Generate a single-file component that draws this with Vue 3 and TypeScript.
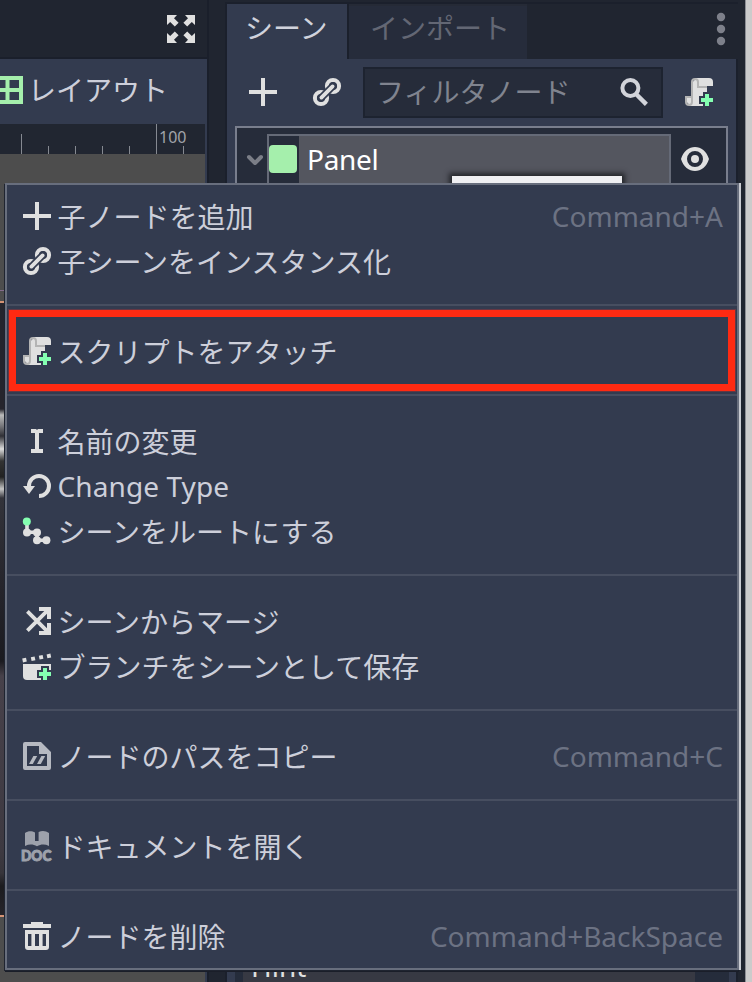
<script setup lang="ts">
interface MenuEntry {
  label?: string
  icon?: string
  shortcut?: string
  latin?: boolean
}

const separator: MenuEntry = {}

const entries: MenuEntry[] = [
  { label: '子ノードを追加', icon: 'add', shortcut: 'Command+A' },
  { label: '子シーンをインスタンス化', icon: 'link' },
  separator,
  { label: 'スクリプトをアタッチ', icon: 'script' },
  separator,
  { label: '名前の変更', icon: 'rename' },
  { label: 'Change Type', icon: 'reload', latin: true },
  { label: 'シーンをルートにする', icon: 'root' },
  separator,
  { label: 'シーンからマージ', icon: 'merge' },
  { label: 'ブランチをシーンとして保存', icon: 'clapper' },
  separator,
  { label: 'ノードのパスをコピー', icon: 'path', shortcut: 'Command+C' },
  separator,
  { label: 'ドキュメントを開く', icon: 'doc' },
  separator,
  { label: 'ノードを削除', icon: 'trash', shortcut: 'Command+BackSpace' },
]
</script>

<template>
  <div class="editor">
    <svg class="sprite" aria-hidden="true">
      <symbol id="add" viewBox="0 0 16 16"><path d="M7 1v6H1v2h6v6h2V9h6V7H9V1z" /></symbol>
      <symbol id="link" viewBox="0 0 16 16">
        <g fill="none" stroke="#e0e0e0">
          <circle cx="11" cy="5" r="3.05" stroke-width="2" />
          <circle cx="5" cy="11" r="3.05" stroke-width="2" />
          <path d="M5 11l6-6" stroke="#333b4f" stroke-width="3.7" stroke-linecap="round" />
          <path d="M5.2 10.8l5.6-5.6" stroke-width="1.9" stroke-linecap="round" />
        </g>
      </symbol>
      <symbol id="script" viewBox="0 0 16 16">
        <path d="M6 1v1a1 1 0 0 0-1 1v10H4v-2H2v2a1 1 0 0 0 1 1v1h7a2 2 0 0 0 2-2V5h3V3a2 2 0 0 0-2-2z" />
        <path fill="#b4b4b4" d="M6 1a2 2 0 0 0-2 2v7H1v3a2 2 0 0 0 4 0V3a1 1 0 0 1 2 0v3h5V5H8V3a2 2 0 0 0-2-2zM2 11h2v2a1 1 0 0 1-2 0z" />
        <path fill="#333b4f" d="M10 8h4v2h2v4h-2v2h-4v-2H8v-4h2z" />
        <path fill="#84ffb1" d="M11 9h2v2h2v2h-2v2h-2v-2H9v-2h2z" />
      </symbol>
      <symbol id="rename" viewBox="0 0 16 16"><path d="M5 2h2.5l.5.5.5-.5H11v2H9v8h2v2H5v-2h2V4H5z" /></symbol>
      <symbol id="reload" viewBox="0 0 16 16">
        <path d="M4 8.5V8a5 5 0 1 1 5 5" fill="none" stroke="#e0e0e0" stroke-width="2" />
        <path d="M1 8h6l-3 4z" />
      </symbol>
      <symbol id="root" viewBox="0 0 16 16">
        <path d="M3 3v5.6h5v4h4.7" fill="none" stroke="#e0e0e0" stroke-width="1.8" />
        <circle cx="3" cy="8.7" r="2" /><circle cx="8" cy="8.7" r="2" />
        <circle cx="8" cy="12.6" r="2" /><circle cx="12.7" cy="12.6" r="2" />
        <circle cx="2.9" cy="3.2" r="2" fill="#84ffb1" />
      </symbol>
      <symbol id="merge" viewBox="0 0 16 16">
        <path d="M3.2 3.2l10 10M3.2 12.8l10-10" fill="none" stroke="#e0e0e0" stroke-width="1.9" />
        <path d="M9 1h6v6h-2V3H9zM13 9h2v6H9v-2h4z" />
      </symbol>
      <symbol id="clapper" viewBox="0 0 16 16">
        <path d="M.6 4.3l1.9-.4.4 1.9-1.9.4zM4.9 3.6l1.9-.4.4 1.9-1.9.4zM8.9 2.900l1.9-.4.4 1.9-1.9.4zM12.8 2.200l1.9-.4.4 1.9-1.9.4z" />
        <path d="M1 7h14v8H3a2 2 0 0 1-2-2z" />
        <path fill="#333b4f" d="M10 8h4v2h2v5h-2v1h-4v-2H8v-4h2z" />
        <path fill="#84ffb1" d="M11 9h2v2h2v2h-2v2h-2v-2H9v-2h2z" />
      </symbol>
      <symbol id="path" viewBox="0 0 16 16">
        <path fill="#b6b9c1" fill-rule="evenodd" d="M2 1h8l5 5v8a1 1 0 0 1-1 1H2a1 1 0 0 1-1-1V2a1 1 0 0 1 1-1zm1 2v10h10V7H9V3z" />
        <path fill="#b6b9c1" d="M4 12h1.9l2.2-4H6.2zM8 12h1.9l2.2-4h-1.9z" />
      </symbol>
      <symbol id="doc" viewBox="0 0 16 16">
        <g fill="#9da1ab">
          <path d="M2 1.5C3.5.3 5.5.3 7 1.3V5.5h1.8V1c1.7-.9 3.6-.7 5.2.5V8c-2-1-4-1-6 .1C6 7 4 7 2 8z" />
          <text x="0" y="15.4" textLength="15.2" lengthAdjust="spacingAndGlyphs" class="doc-word">DOC</text>
        </g>
      </symbol>
      <symbol id="trash" viewBox="0 0 16 16">
        <path d="M5 1h6v1h4v2H1V2h4z" />
        <path fill-rule="evenodd" d="M2 5h12v8.5a1.500 1.500 0 0 1-1.500 1.500h-9A1.500 1.500 0 0 1 2 13.500zM3.500 7v6h1.700V7zM7 7v6h2V7zM10.800 7v6h1.700V7z" />
      </symbol>
      <symbol id="search" viewBox="0 0 16 16">
        <path d="M9 9l5.2 5.2" fill="none" stroke="#d2d4da" stroke-width="2.2" />
        <circle cx="6.2" cy="6" r="4" fill="none" stroke="#d2d4da" stroke-width="2" />
      </symbol>
      <symbol id="expand" viewBox="0 0 16 16">
        <path d="M1 1h5L4.5 2.6 6.8 4.900 4.900 6.800 2.600 4.500 1 6z" />
        <path d="M15 1h-5l1.500 1.600-2.300 2.300 1.900 1.900 2.300-2.300L15 6zM1 15h5l-1.500-1.600 2.300-2.300-1.900-1.900-2.300 2.300L1 10zM15 15h-5l1.500-1.600-2.300-2.300 1.900-1.900 2.300 2.300L15 10z" />
      </symbol>
      <symbol id="eye" viewBox="0 0 16 16">
        <path fill-rule="evenodd" d="M8 2C5 2 2.200 4.100 1 8c1.200 3.900 4 6 7 6s5.800-2.100 7-6c-1.200-3.900-4-6-7-6zm0 2a4 4 0 1 1 0 8 4 4 0 0 1 0-8z" />
        <circle cx="8" cy="8" r="2" />
      </symbol>
    </svg>

    <section class="canvas-side">
      <header class="canvas-top"><svg class="icon"><use href="#expand" /></svg></header>
      <div class="layout-bar">
        <svg class="grid-icon" viewBox="0 0 23 28">
          <path d="M-5 2H21V26H-5M-5 14H21M7.500 2V26" fill="none" stroke="#a5efac" stroke-width="4" />
        </svg>
        <span>レイアウト</span>
      </div>
      <div class="ruler">
        <svg viewBox="0 0 205 30" class="ticks">
          <path d="M21.500 10V30M48.500 22V30M75.500 22V30M102.500 22V30M129.500 22V30M156.500 0V30M183.500 22V30" stroke="#858991" />
        </svg>
        <span class="ruler-value">100</span>
      </div>
      <div class="canvas">
        <div class="artwork"></div>
      </div>
    </section>

    <section class="dock">
      <nav class="tabs">
        <div class="tab active">シーン</div>
        <div class="tab">インポート</div>
        <svg class="dots" viewBox="0 0 10 34">
          <circle cx="5" cy="5" r="4.2" /><circle cx="5" cy="17" r="4.2" /><circle cx="5" cy="29" r="4.2" />
        </svg>
      </nav>
      <div class="dock-body">
        <div class="tools">
          <svg class="icon"><use href="#add" /></svg>
          <svg class="icon tool-link"><use href="#link" /></svg>
          <div class="filter">
            <span>フィルタノード</span>
            <svg class="icon"><use href="#search" /></svg>
          </div>
          <svg class="icon tool-script"><use href="#script" /></svg>
        </div>
        <div class="tree">
          <svg class="chevron" viewBox="0 0 16 10"><path d="M2 2l6 6 6-6" /></svg>
          <div class="tree-item">
            <div class="swatch-cell"><i class="swatch"></i></div>
            <span>Panel</span>
          </div>
          <svg class="icon eye"><use href="#eye" /></svg>
        </div>
        <div class="property-frame">
          <div class="property">Hint</div>
        </div>
      </div>
    </section>
    <div class="dock-gutter"></div>
    <aside class="window-edge"></aside>

    <div class="tooltip"></div>

    <div class="menu">
      <template v-for="(entry, i) in entries" :key="i">
        <div v-if="entry.label" class="entry">
          <svg class="icon"><use :href="'#' + entry.icon" /></svg>
          <span class="label" :class="{ latin: entry.latin }">{{ entry.label }}</span>
          <span class="shortcut">{{ entry.shortcut }}</span>
        </div>
        <div v-else class="separator"></div>
      </template>
      <div class="highlight"></div>
    </div>
  </div>
</template>

<style>
body {
  background: #202530;
  overflow: hidden;
}
</style>

<style scoped>
.editor {
  position: relative;
  display: flex;
  width: 752px;
  height: 982px;
  overflow: hidden;
  background: #202530;
  color: #cdcfda;
  font: 28px/40px "Noto Sans", "Noto Sans CJK JP", sans-serif;
}
.editor * {
  box-sizing: border-box;
}
.sprite {
  position: absolute;
  width: 0;
  height: 0;
}
.icon {
  display: block;
  flex: none;
  width: 32px;
  height: 32px;
  fill: #e0e0e0;
}
.doc-word {
  font: 900 7.6px Lato, sans-serif;
  stroke: #9da1ab;
  stroke-width: 0.5;
}

.canvas-side {
  display: flex;
  flex: none;
  flex-direction: column;
  width: 209px;
  border-right: 2px solid #1a1f2b;
}
.canvas-top {
  display: flex;
  justify-content: flex-end;
  height: 59px;
  padding: 13px 10px 0;
  border-bottom: 2px solid #1a1f2b;
}
.layout-bar {
  display: flex;
  align-items: center;
  gap: 5px;
  height: 65px;
  padding-bottom: 3px;
  background: #333b4f;
}
.grid-icon {
  width: 23px;
  height: 28px;
}
.ruler {
  display: flex;
  width: 205px;
  height: 30px;
  background: #212631;
  box-shadow: 2px 0 #333b4f;
}
.ticks {
  flex: none;
  width: 205px;
  height: 30px;
}
.ruler-value {
  margin-left: -46px;
  color: #a0a3a9;
  font-size: 16px;
  line-height: 26px;
}
.canvas {
  flex: 1;
  padding-top: 136px;
  background: linear-gradient(90deg, #4d4d4d 205px, #333b4f 205px);
}
.artwork {
  width: 205px;
  height: 627px;
  border-top: 1px solid #846c8c;
  border-bottom: 2px solid #d59375;
  background: linear-gradient(#4d4d4d 10px, #d59375 10px, #d59375 12px, #26252d 12px, #26252d 118px, #bbb 124px, #77777b 135px, #303036 145px, #ddd 158px, #333 170px, #222 186px, #c5c5c5 198px, #33333a 207px, #25242b 300px, #1b1b20 370px, #47414a 385px, #3d3941 560px, #37353b 582px, #1c1c1f 595px, #26242a);
}

.dock {
  display: flex;
  flex: none;
  flex-direction: column;
  width: 513px;
  margin-left: 16px;
  padding-top: 2px;
}
.tabs {
  display: flex;
  height: 57px;
  border-top: 2px solid #1b202c;
  background: #202530;
}
.tab {
  width: 178px;
  padding: 4px 0 0 21px;
  background: #262c3b;
  color: #636774;
  box-shadow: inset 0 2px #252a36;
}
.tab.active {
  width: 124px;
  padding-left: 18px;
  border: solid #1b202c;
  border-width: 0 2px;
  background: #333b4f;
  color: #d0d2dc;
  box-shadow: none;
}
.dots {
  width: 10px;
  height: 34px;
  margin: 8px 0 0 189px;
  fill: #7d808a;
}
.dock-body {
  display: flex;
  flex: 1;
  flex-direction: column;
  padding: 8px 8px 0;
  border: solid #1b202c;
  border-width: 0 2px;
  background: #333b4f;
}
.tools {
  display: flex;
  align-items: center;
  height: 51px;
  padding-left: 12px;
}
.tools > .icon {
  margin-top: -1px;
}
.tools > .tool-link {
  margin-left: 32px;
}
.filter {
  display: flex;
  align-items: center;
  justify-content: space-between;
  width: 300px;
  height: 51px;
  margin-left: 20px;
  padding: 0 11px 2px;
  border: 2px solid #1d2330;
  background: #262c3a;
  color: #80848f;
}
.tools > .tool-script {
  margin-left: 20px;
}
.tree {
  display: flex;
  height: 150px;
  margin-top: 8px;
  padding: 6px 0 0 10px;
  border: 2px solid #797e8d;
  background: #262c3a;
}
.chevron {
  flex: none;
  width: 16px;
  height: 10px;
  margin: 21px 4px 0 0;
  overflow: visible;
  fill: none;
  stroke: #7b7e87;
  stroke-width: 4;
  stroke-linecap: round;
  stroke-linejoin: round;
}
.tree-item {
  display: flex;
  width: 404px;
  height: 51px;
  border: 2px solid #656a77;
  background: #54565f;
  color: #fff;
  line-height: 46px;
  letter-spacing: -0.3px;
}
.swatch-cell {
  width: 30px;
  margin-right: 8px;
  padding-top: 9px;
  background: #262c3a;
}
.swatch {
  display: block;
  width: 28px;
  height: 28px;
  border-radius: 4px;
  background: #a5efac;
}
.eye {
  margin: 9px 0 0 8px;
}
.property-frame {
  flex: 1;
  display: flex;
  align-items: flex-end;
  margin-right: -1px;
  padding-left: 8px;
  background: #252c3b;
}
.property {
  width: 452px;
  height: 44px;
  padding-left: 8px;
  background: #373943;
  color: #e0e0e0;
  line-height: 56px;
}
.dock-gutter {
  flex: 1;
}
.window-edge {
  width: 7px;
  border-left: 1px solid #8c8e94;
  background: #cbcbcb;
}

.tooltip {
  position: absolute;
  top: 176px;
  left: 452px;
  width: 170px;
  height: 20px;
  background: #efeff2;
  box-shadow: 0 0 5px 3px #24262b;
}
.menu {
  position: absolute;
  top: 183px;
  left: 5px;
  width: 734px;
  height: 787px;
  padding-top: 9px;
  border: 2px solid #686e7d;
  background: #333b4f;
  box-shadow: 2px 0 #c9cbd1, -1px 1px #1f2430, 0 2px #1a1e29;
}
.entry {
  display: flex;
  align-items: center;
  height: 45px;
  padding: 0 14px;
}
.entry .icon {
  margin-top: -1px;
}
.label {
  flex: 1;
  margin-left: 4.5px;
  white-space: nowrap;
}
.latin {
  padding-bottom: 2px;
  letter-spacing: 0.1px;
}
.shortcut {
  padding-bottom: 2px;
  color: #6c7283;
}
.separator {
  height: 45px;
  padding-top: 20px;
}
.separator::before {
  display: block;
  height: 2px;
  background: #474e60;
  content: "";
}
.highlight {
  position: absolute;
  top: 124px;
  left: 1px;
  width: 728px;
  height: 83px;
  border: 8px solid #ff2a12;
  outline: 1px solid #653744;
  outline-offset: -1px;
}
</style>
